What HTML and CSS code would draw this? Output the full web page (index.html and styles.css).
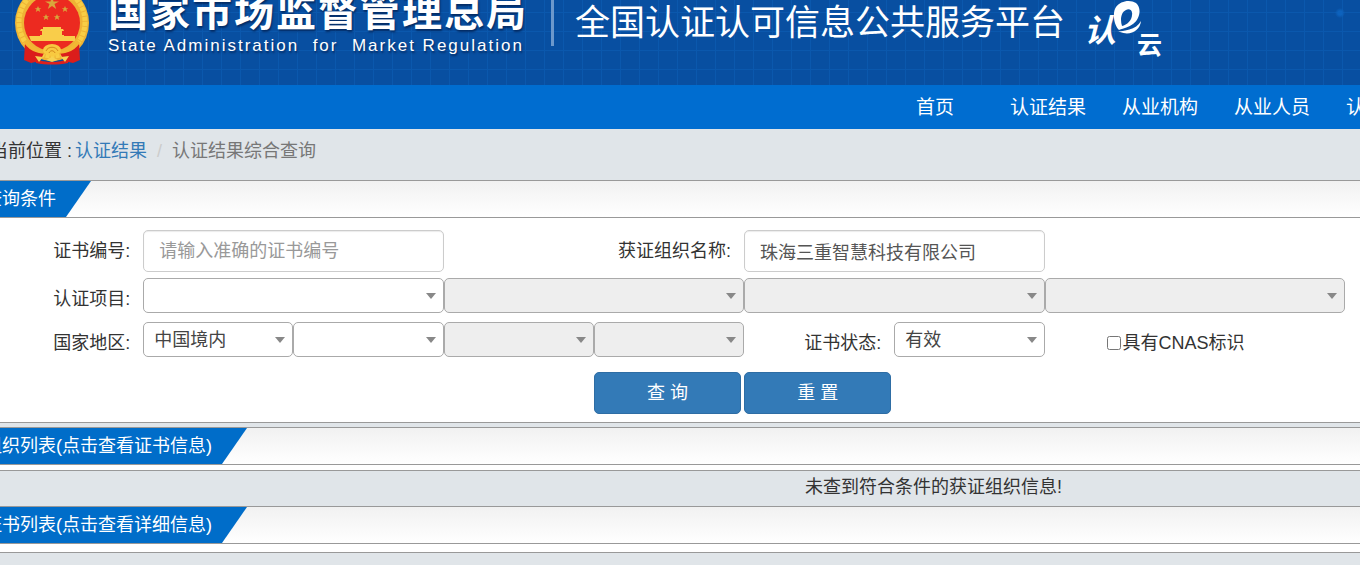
FILE: index.html
```html
<!DOCTYPE html>
<html lang="zh-CN">
<head>
    <meta charset="UTF-8">
    <meta name="viewport" content="width=device-width, initial-scale=1.0">
    <title>全国认证认可信息公共服务平台</title>
    <link rel="stylesheet" href="styles.css">
</head>
<body>
    <div class="page">
        <header class="header">
            <svg class="emblem" viewBox="14 -16 76 82" aria-hidden="true">
                <ellipse cx="52" cy="23" rx="37" ry="38" fill="#eeb335"/>
                <ellipse cx="52" cy="22" rx="33" ry="34" fill="none" stroke="#f8ce45" stroke-width="5" stroke-dasharray="4 1"/>
                <circle cx="52" cy="23" r="28" fill="#ec2a20"/>
                <!-- stars -->
                <g fill="#d9a63c">
                    <path d="M52-4l1.500 5.500h5.500l-4.500 2.500 1.700 5-4.200-3-4.200 3 1.700-5-4.500-2.500h5.500z"/>
                    <path id="star" d="M38 6l1 2.200h2.300l-1.900 1.400.8 2.400-2.200-1.500-2.200 1.500.8-2.400-1.900-1.400h2.300z"/>
                    <use href="#star" x="27"/>
                    <use href="#star" x="8" y="8"/>
                    <use href="#star" x="19" y="8"/>
                </g>
                <!-- gate -->
                <path d="M43 27h18v2h2l1 2H40l1-2h2zM42 31h20v4h2v2H40v-2h2zM29 36h46v5H31z" fill="#f9cd4a"/>
                <!-- ribbons -->
                <path d="M25 42c5 8 12 11 19 11l-4 8-9 2-7-3z" fill="#db1d1b"/>
                <path d="M79 42c-5 8-12 11-19 11l4 8 9 2 7-3z" fill="#db1d1b"/>
                <path d="M35 59c10 4 24 4 34 0l-1 4c-10 2-22 2-32 0z" fill="#df201c"/>
                <path d="M27 40c6 9 15 11 25 11s19-2 25-11l3 3c-7 10-17 11-28 11S31 53 24 43z" fill="#f2b733"/>
                <ellipse cx="52" cy="50" rx="9" ry="6" fill="#f8c940"/>
                <path d="M46 51c2-5 10-5 12 0M49 53c1-3 5-3 6 0" fill="none" stroke="#d4871b" stroke-width="1"/>
                <path d="M35 56l8 1-4 5zM69 56l-8 1 4 5zM46 60l6-3 6 3-6 2z" fill="#f6d253"/>
            </svg>
            <div class="brand">
                <h1 class="brand-name">国家市场监督管理总局</h1>
                <p class="brand-en">State Administration&nbsp; for&nbsp; Market Regulation</p>
            </div>
            <div class="divider"></div>
            <h2 class="platform">全国认证认可信息公共服务平台</h2>
            <svg class="cloud-logo" viewBox="0 0 80 58" role="img" aria-label="认e云">
                <text x="1" y="42" class="cloud-ren">认</text>
                <path fill-rule="evenodd" d="M36 30C31 25 29 13 33 7C37 1 47-1 53 3C59 8 57 19 50 24C46 27 41 28 36 30ZM39 26C44 25 49 20 49 15C50 10 46 8 43 10C38 12 37 20 39 26Z" fill="#fff"/>
                <path d="M28 32C42 31 53 30 58 21C57 31 47 36 37 32C34 31 31 32 28 32Z" fill="#fff"/>
                <path d="M32 31C42 30 50 28 54 23" fill="none" stroke="#084fa1" stroke-width="1"/>
                <text x="54" y="54" class="cloud-yun">云</text>
            </svg>
        </header>

        <nav class="nav">
            <a href="#" class="nav-home">首页</a>
            <a href="#">认证结果</a>
            <a href="#">从业机构</a>
            <a href="#">从业人员</a>
            <a href="#">认</a>
        </nav>

        <div class="breadcrumb">
            <span>当前位置 :</span>
            <a href="#">认证结果</a>
            <span class="separator">/</span>
            <span class="current">认证结果综合查询</span>
        </div>

        <section class="panel">
            <div class="panel-head"><h3 class="panel-tab">查询条件</h3></div>
            <form class="search-form">
                <div class="form-row">
                    <label class="field-label" for="cert-no">证书编号:</label>
                    <input class="text-input" type="text" id="cert-no" placeholder="请输入准确的证书编号">
                    <label class="field-label org-label" for="org-name">获证组织名称:</label>
                    <input class="text-input" type="text" id="org-name" value="珠海三重智慧科技有限公司">
                </div>
                <div class="form-row">
                    <label class="field-label" for="project">认证项目:</label>
                    <div class="select-box wide"><select id="project"><option></option></select></div>
                    <div class="select-box wide"><select aria-label="认证项目" disabled><option></option></select></div>
                    <div class="select-box wide"><select aria-label="认证项目" disabled><option></option></select></div>
                    <div class="select-box wide"><select aria-label="认证项目" disabled><option></option></select></div>
                </div>
                <div class="form-row">
                    <label class="field-label" for="country">国家地区:</label>
                    <div class="select-box"><select id="country"><option>中国境内</option></select></div>
                    <div class="select-box"><select aria-label="国家地区"><option></option></select></div>
                    <div class="select-box"><select aria-label="国家地区" disabled><option></option></select></div>
                    <div class="select-box"><select aria-label="国家地区" disabled><option></option></select></div>
                    <label class="field-label" for="status">证书状态:</label>
                    <div class="select-box"><select id="status"><option>有效</option></select></div>
                    <label class="check-label"><input type="checkbox">具有CNAS标识</label>
                </div>
                <div class="form-row buttons">
                    <button type="button" class="btn search-btn">查 询</button>
                    <button type="reset" class="btn">重 置</button>
                </div>
            </form>
        </section>

        <section class="panel result-panel">
            <div class="panel-head"><h3 class="panel-tab">组织列表(点击查看证书信息)</h3></div>
            <p class="empty">未查到符合条件的获证组织信息!</p>
        </section>

        <section class="panel">
            <div class="panel-head"><h3 class="panel-tab">证书列表(点击查看详细信息)</h3></div>
            <div class="list-end"></div>
        </section>
    </div>
</body>
</html>
```
FILE: styles.css
```css
* {
    box-sizing: border-box;
}

body {
    margin: 0;
    overflow: hidden;
    background-color: #e0e5e9;
    color: #333;
    font-family: "Liberation Sans", "Noto Sans CJK SC", sans-serif;
    font-size: 18px;
    font-weight: 400;
    line-height: 24px;
}

h1, h2, h3, p {
    margin: 0;
    font-weight: inherit;
}

a {
    color: #337ab7;
    text-decoration: none;
}

input, select, button {
    font: inherit;
}

/* page is scrolled slightly to the right */
.page {
    margin-left: -16px;
}

/* header */
.header {
    display: flex;
    align-items: flex-start;
    height: 85px;
    padding-left: 30px;
    overflow: hidden;
    color: #fff;
    white-space: nowrap;
    background-color: #084fa1;
    background-image:
        radial-gradient(circle at 1356px 13px, #0d62bd 0, #0d62bd 2px, transparent 5px),
        linear-gradient(90deg, #0b58ad 1px, transparent 1px),
        linear-gradient(#0b58ad 1px, transparent 1px);
    background-size: auto, 19px 19px, 19px 19px;
    background-position: 0 0, 9px 0, 0 12px;
}

.emblem {
    flex: none;
    width: 76px;
    height: 82px;
    margin-top: -16px;
}

.brand {
    margin: -8px 0 0 18px;
    text-shadow: 1px 2px 2px rgba(0, 20, 60, 0.6);
}

.brand-name {
    font-size: 40px;
    font-weight: 700;
    line-height: 40px;
    letter-spacing: 2px;
}

.brand-en {
    font-size: 17px;
    line-height: 28px;
    letter-spacing: 2px;
}

.divider {
    width: 3px;
    height: 46px;
    margin: 0 21px 0 23px;
    background-color: #6c98cc;
}

.platform {
    font-size: 35px;
    font-weight: 400;
    line-height: 46px;
}

.cloud-logo {
    flex: none;
    width: 80px;
    height: 58px;
    margin-left: 18px;
}

.cloud-ren {
    fill: #fff;
    font-size: 32px;
    font-style: italic;
    font-weight: 700;
}

.cloud-yun {
    fill: #fff;
    font-size: 25px;
    font-weight: 700;
}

/* nav */
.nav {
    display: flex;
    justify-content: flex-end;
    gap: 36px;
    height: 44px;
    margin-right: -5px;
    background-color: #006dd0;
    font-size: 19px;
    line-height: 46px;
    white-space: nowrap;
}

.nav a {
    color: #fff;
}

.nav-home {
    margin-right: 20px;
}

.breadcrumb {
    display: flex;
    height: 51px;
    padding: 10px 0 0 6px;
}

.breadcrumb a {
    margin-left: 3px;
}

.separator {
    margin: 0 10px;
    color: #ccc;
}

.current {
    color: #777;
}

/* panels */
.panel {
    border-top: 1px solid #999;
    background-color: #fff;
}

.panel-head {
    display: flex;
    height: 37px;
    border-bottom: 1px solid #999;
    background: linear-gradient(#f1f1f1, #fff);
}

.panel-tab {
    padding-right: 35px;
    background-color: #006dc9;
    clip-path: polygon(0 0, 100% 0, calc(100% - 25px) 100%, 0 100%);
    color: #fff;
    font-size: 18px;
    line-height: 36px;
}

.result-panel {
    margin-top: 4px;
}

.empty {
    height: 36px;
    margin-top: 5px;
    padding: 4px 0 0 38%;
    border-top: 1px solid #999;
    background-color: #e0e5e9;
    text-align: center;
}

.list-end {
    height: 9px;
    border-bottom: 1px solid #999;
}

/* search form */
.search-form {
    padding: 12px 15px 8px 9px;
    border-bottom: 1px solid #999;
}

.form-row {
    display: grid;
    grid-template-columns: repeat(9, minmax(0, 1fr));
    margin-bottom: 2px;
}

.form-row:first-child {
    margin-bottom: 6px;
}

.field-label {
    padding-right: 13px;
    line-height: 42px;
    text-align: right;
    white-space: nowrap;
}

.org-label {
    grid-column: span 2;
}

.text-input {
    grid-column: span 2;
    width: 100%;
    height: 42px;
    padding: 0 15px;
    border: 1px solid #ccc;
    border-radius: 5px;
    background-color: #fff;
    box-shadow: inset 0 1px 1px rgba(0, 0, 0, 0.08);
    color: #555;
}

.text-input::placeholder {
    color: #999;
}

.select-box {
    position: relative;
    height: 35px;
}

.select-box.wide {
    grid-column: span 2;
}

.select-box::after {
    content: "";
    position: absolute;
    top: 15px;
    right: 8px;
    border: 5px solid transparent;
    border-top: 6px solid #888;
    border-bottom: 0;
    pointer-events: none;
}

.select-box select {
    display: block;
    width: 100%;
    height: 35px;
    padding: 0 10px;
    appearance: none;
    border: 1px solid #aaa;
    border-radius: 5px;
    background-color: #fff;
    color: #444;
    opacity: 1;
}

.select-box select:disabled {
    background-color: #eee;
}

.check-label {
    display: flex;
    align-items: center;
    gap: 2px;
    height: 42px;
    padding-left: 62px;
    white-space: nowrap;
}

.check-label input {
    flex: none;
    width: 14px;
    height: 14px;
    margin: 0;
}

.buttons {
    margin: 8px 0 0;
}

.btn {
    height: 42px;
    margin-right: 3px;
    border: 1px solid #2e6da4;
    border-radius: 5px;
    background-color: #337ab7;
    color: #fff;
    cursor: pointer;
}

.search-btn {
    grid-column-start: 5;
}
```
